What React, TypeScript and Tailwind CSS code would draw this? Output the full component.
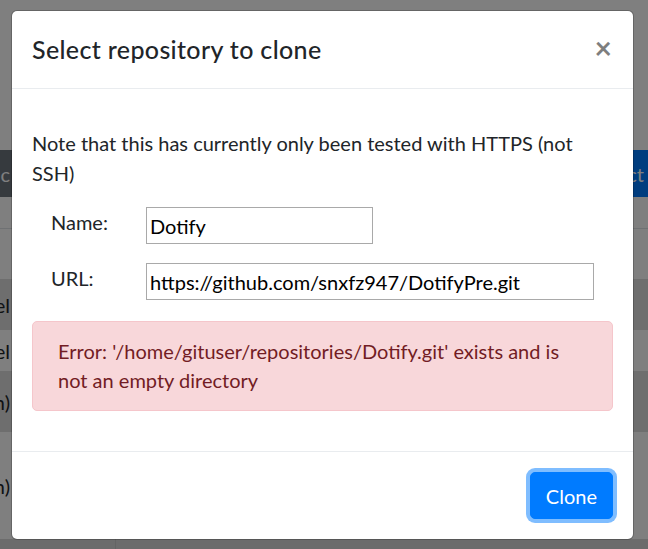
export default function App() {
  return (
    <div className="relative h-[549px] w-[648px] overflow-hidden bg-white font-['Lato',sans-serif] text-[#212529]">
      {/* page behind the modal */}
      <div className="flex flex-col pt-[150px] text-[20px] leading-[30px]">
        <div className="flex h-[47px] justify-between">
          <div className="flex w-[60px] items-center justify-end overflow-hidden bg-[#6c757d] pr-[50px] text-white">
            Sync
          </div>
          <div className="flex w-[60px] items-center justify-end overflow-hidden bg-[#007bff] pr-[4px] text-white">
            Select
          </div>
        </div>
        <div className="h-[32px] border-b border-[#dee2e6]" />
        <div className="h-[50px]" />
        <div className="flex h-[51px] items-center bg-[#dcdcdc]">
          <div className="flex w-[10px] justify-end overflow-hidden">Cancel</div>
        </div>
        <div className="flex h-[41px] items-center">
          <div className="flex w-[10px] justify-end overflow-hidden">Cancel</div>
        </div>
        <div className="flex h-[61px] items-center bg-[#dcdcdc]">
          <div className="flex w-[10px] justify-end overflow-hidden">(main)</div>
        </div>
        <div className="flex h-[107px] items-center">
          <div className="flex w-[10px] justify-end overflow-hidden">(main)</div>
        </div>
        <div className="h-[20px] bg-[#d8d8d8]">
          <div className="ml-[115px] h-full border-l border-[#c8c8c8]" />
        </div>
      </div>

      {/* backdrop */}
      <div className="absolute inset-0 bg-black/50" />

      {/* modal */}
      <div className="absolute left-[11px] top-[10px] flex w-[623px] flex-col rounded-[6px] border border-black/20 bg-white bg-clip-padding">
        <div className="flex items-start justify-between border-b border-[#e9ecef] p-[20px]">
          <h5 className="text-[25px] font-medium leading-[37px] tracking-[0.35px]">Select repository to clone</h5>
          <button className="mr-[1px] mt-[-2px] text-[30px] font-bold leading-[37px] text-black opacity-50">×</button>
        </div>

        <div className="p-[20px] pt-[39px] text-[20px] leading-[30px]">
          <p className="mb-[19px]">Note that this has currently only been tested with HTTPS (not SSH)</p>

          <div className="flex flex-col gap-[19px]">
            <div className="flex items-start">
              <label className="w-[114px] pl-[19px]">Name:</label>
              <input
                type="text"
                defaultValue="Dotify"
                className="h-[37px] w-[227px] border border-[#a9a9a9] px-[3px] text-[20px] text-black outline-none"
              />
            </div>
            <div className="flex items-start">
              <label className="w-[114px] pl-[19px]">URL:</label>
              <input
                type="text"
                defaultValue="https://github.com/snxfz947/DotifyPre.git"
                className="h-[37px] w-[448px] border border-[#a9a9a9] px-[3px] text-[20px] text-black outline-none"
              />
            </div>
          </div>

          <div className="mb-[20px] mt-[21px] rounded-[5px] border border-[#f5c6cb] bg-[#f8d7da] px-[25px] py-[15px] leading-[29px] text-[#721c24]">
            Error: '/home/gituser/repositories/Dotify.git' exists and is not an empty directory
          </div>
        </div>

        <div className="flex justify-end border-t border-[#e9ecef] p-[20px]">
          <button className="rounded-[5px] border border-[#007bff] bg-[#007bff] px-[15px] py-[7.5px] text-[20px] leading-[30px] text-white shadow-[0_0_0_4px_rgba(0,123,255,0.5)]">
            Clone
          </button>
        </div>
      </div>
    </div>
  );
}
